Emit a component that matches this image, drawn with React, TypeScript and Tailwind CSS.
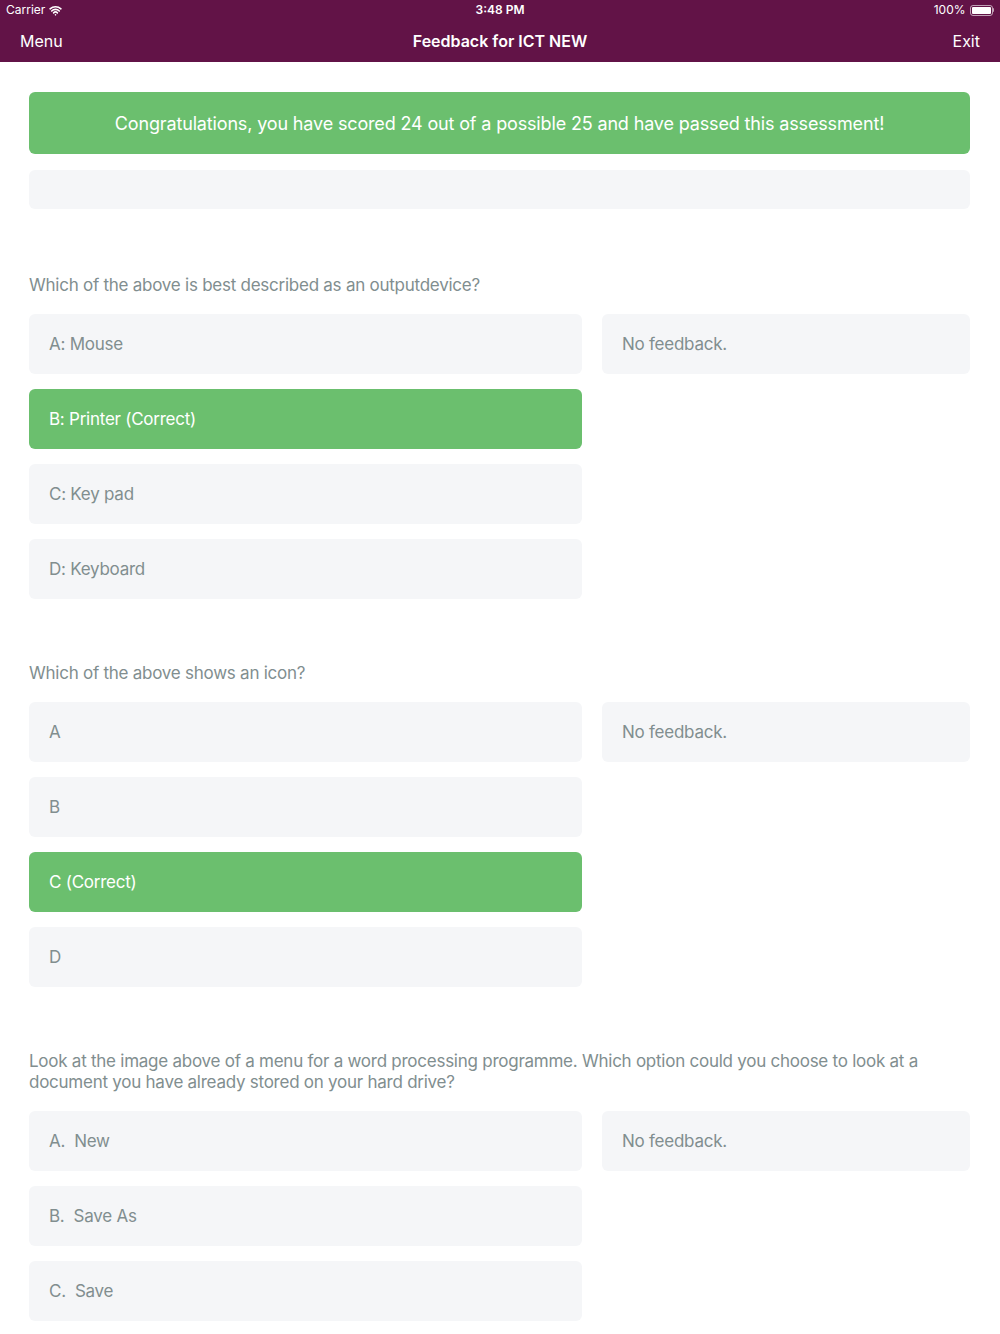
import { Wifi } from 'lucide-react'

type Question = {
  text: string
  options: { label: string; correct?: boolean }[]
}

const questions: Question[] = [
  {
    text: 'Which of the above is best described as an outputdevice?',
    options: [
      { label: 'A: Mouse' },
      { label: 'B: Printer (Correct)', correct: true },
      { label: 'C: Key pad' },
      { label: 'D: Keyboard' },
    ],
  },
  {
    text: 'Which of the above shows an icon?',
    options: [
      { label: 'A' },
      { label: 'B' },
      { label: 'C (Correct)', correct: true },
      { label: 'D' },
    ],
  },
  {
    text: 'Look at the image above of a menu for a word processing programme. Which option could you choose to look at a document you have already stored on your hard drive?',
    options: [
      { label: 'A.  New' },
      { label: 'B.  Save As' },
      { label: 'C.  Save' },
    ],
  },
]

function StatusBar() {
  return (
    <div className="flex h-5 items-center justify-between px-[6px] text-[12px] text-white">
      <div className="flex w-[200px] items-center gap-1">
        <span>Carrier</span>
        <Wifi size={13} strokeWidth={3} />
      </div>
      <span className="font-semibold">3:48 PM</span>
      <div className="flex w-[200px] items-center justify-end gap-1">
        <span>100%</span>
        <div className="flex items-center">
          <div className="h-[11px] w-[23px] rounded-[3px] border border-white/60 p-[1px]">
            <div className="h-full w-full rounded-[1px] bg-white" />
          </div>
          <div className="h-[4px] w-[1.5px] rounded-r bg-white/60" />
        </div>
      </div>
    </div>
  )
}

function QuestionBlock({ q }: { q: Question }) {
  return (
    <div className="mt-[64px] first:mt-[66px]">
      <p className="pr-[30px] text-[17px] leading-[21px] tracking-[-0.25px] text-[#818e8f]">{q.text}</p>
      <div className="mt-[18px] flex gap-[20px]">
        <div className="flex w-[553px] flex-col gap-[15px]">
          {q.options.map((o) => (
            <div
              key={o.label}
              className={
                o.correct
                  ? 'flex h-[60px] items-center whitespace-pre rounded-[6px] bg-[#6bbf6e] px-[20px] pt-[2px] text-[17px] tracking-[-0.25px] text-white'
                  : 'flex h-[60px] items-center whitespace-pre rounded-[6px] bg-[#f5f6f8] px-[20px] pt-[2px] text-[17px] tracking-[-0.25px] text-[#818e8f]'
              }
            >
              {o.label}
            </div>
          ))}
        </div>
        <div className="flex h-[60px] w-[368px] items-center rounded-[6px] bg-[#f5f6f8] px-[20px] pt-[2px] text-[17px] tracking-[-0.25px] text-[#818e8f]">
          No feedback.
        </div>
      </div>
    </div>
  )
}

export default function App() {
  return (
    <div className="min-h-[1334px] bg-white" style={{ fontFamily: 'Inter, "Noto Sans", sans-serif' }}>
      <div className="bg-[#621347]">
        <StatusBar />
        <div className="flex h-[42px] items-center justify-between px-[20px] text-white">
          <span className="w-[120px] text-[16px]">Menu</span>
          <span className="text-[16px] font-semibold">Feedback for ICT NEW</span>
          <span className="w-[120px] text-right text-[16px]">Exit</span>
        </div>
      </div>
      <div className="px-[29px] pr-[30px] pt-[30px]">
        <div className="flex h-[62px] items-center justify-center rounded-[6px] bg-[#6bbf6e] text-[18px] tracking-[-0.15px] text-white">
          Congratulations, you have scored 24 out of a possible 25 and have passed this assessment!
        </div>
        <div className="mt-[16px] h-[39px] rounded-[6px] bg-[#f5f6f8]" />
        <div>
          {questions.map((q) => (
            <QuestionBlock key={q.text} q={q} />
          ))}
        </div>
      </div>
    </div>
  )
}
